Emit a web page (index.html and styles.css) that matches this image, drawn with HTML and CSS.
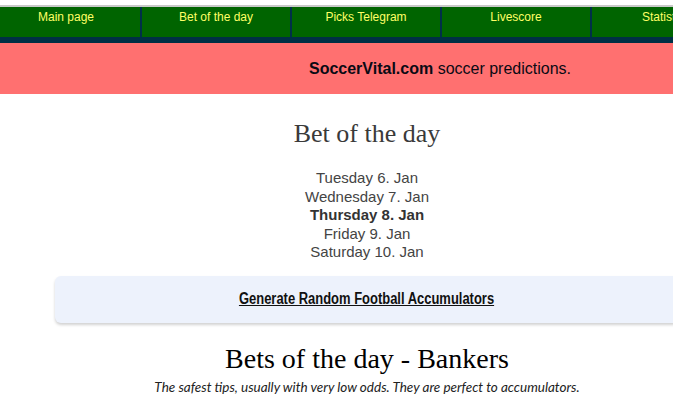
FILE: index.html
```html
<!DOCTYPE html>
<html lang="en">
<head>
<meta charset="utf-8">
<title>Bet of the day - SoccerVital</title>
<link rel="stylesheet" href="styles.css">
</head>
<body>
<div class="page">
  <header class="header">
    <nav class="nav">
      <a class="nav-item" href="#">Main page</a>
      <a class="nav-item" href="#">Bet of the day</a>
      <a class="nav-item" href="#">Picks Telegram</a>
      <a class="nav-item" href="#">Livescore</a>
      <a class="nav-item" href="#">Statistics</a>
      <a class="nav-item" href="#">Contact</a>
    </nav>
    <div class="banner"><span class="banner-text"><b>SoccerVital.com</b> soccer predictions.</span></div>
  </header>
  <div class="layout">
    <main class="main">
      <h2 class="title">Bet of the day</h2>
      <div class="dates">
        <a class="date" href="#">Tuesday 6. Jan</a>
        <a class="date" href="#">Wednesday 7. Jan</a>
        <a class="date date-current" href="#">Thursday 8. Jan</a>
        <a class="date" href="#">Friday 9. Jan</a>
        <a class="date" href="#">Saturday 10. Jan</a>
      </div>
      <div class="acc-box"><a class="acc-link" href="#">Generate Random Football Accumulators</a></div>
      <h1 class="section-title">Bets of the day - Bankers</h1>
      <p class="section-sub">The safest tips, usually with very low odds. They are perfect to accumulators.</p>
    </main>
    <aside class="side"></aside>
  </div>
</div>
</body>
</html>
```
FILE: styles.css
```css
html, body {
  margin: 0;
  padding: 0;
  background: #ffffff;
}
body {
  font-family: "Liberation Sans", Arial, sans-serif;
  overflow-x: hidden;
}
.page {
  width: 880px;
}
.header {
  padding-top: 5px;
}
.nav {
  display: flex;
  justify-content: center;
  height: 30px;
  background: #006400;
  border-top: 2px solid #c9c9c9;
  border-bottom: 6px solid #002f45;
}
.nav-item {
  flex: 0 0 150px;
  box-sizing: border-box;
  border-left: 2px solid #003049;
  padding-top: 3px;
  text-align: center;
  font-size: 12px;
  line-height: 14px;
  color: #ffff66;
  text-decoration: none;
}
.banner {
  height: 51px;
  background: #ff7070;
  display: flex;
  align-items: center;
  justify-content: center;
}
.banner-text {
  font-size: 16px;
  color: #0a0a14;
}
.layout {
  display: grid;
  grid-template-columns: 734px 146px;
}
.main {
  text-align: center;
  padding-top: 25px;
}
.title {
  margin: 0;
  font-family: "Liberation Serif", "Times New Roman", serif;
  font-weight: normal;
  font-size: 26px;
  line-height: 30px;
  color: #3a3a3a;
}
.dates {
  display: flex;
  flex-direction: column;
  align-items: center;
  margin-top: 20px;
}
.date {
  font-size: 15px;
  line-height: 18.5px;
  color: #444444;
  text-decoration: none;
}
.date-current {
  font-weight: bold;
  color: #333333;
}
.acc-box {
  margin: 14px 55px 0 55px;
  height: 47px;
  box-sizing: border-box;
  background: #edf2fc;
  border-radius: 6px;
  box-shadow: 0 2px 3px rgba(0, 0, 0, 0.18);
  display: flex;
  align-items: center;
  justify-content: center;
}
.acc-link {
  display: inline-block;
  font-family: "Liberation Sans", Arial, sans-serif;
  font-weight: bold;
  font-size: 16px;
  color: #111111;
  text-decoration: underline;
  transform: scaleX(0.81);
}
.section-title {
  margin: 20px 0 0 0;
  font-family: "Liberation Serif", "Times New Roman", serif;
  font-weight: normal;
  font-size: 28px;
  line-height: 32px;
  color: #000000;
}
.section-sub {
  margin: 4px 0 0 0;
  font-family: Lato, "Open Sans", sans-serif;
  font-style: italic;
  font-size: 13.5px;
  line-height: 16px;
  color: #222222;
}
```
